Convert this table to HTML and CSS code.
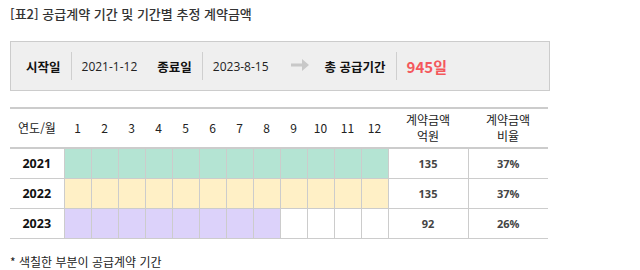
FILE: index.html
```html
<!DOCTYPE html>
<html lang="ko">
<head>
<meta charset="utf-8">
<link rel="stylesheet" href="styles.css">
</head>
<body>
<div class="page">
  <h1 class="title">[표2] 공급계약 기간 및 기간별 추정 계약금액</h1>
  <div class="summary">
    <span class="label">시작일</span>
    <span class="sep"></span>
    <span class="value">2021-1-12</span>
    <span class="label">종료일</span>
    <span class="sep"></span>
    <span class="value">2023-8-15</span>
    <svg class="arrow" width="18" height="12" viewBox="0 0 18 12"><path d="M0 4.5h11V0l7 6-7 6V7.5H0z" fill="#c8c8c8"/></svg>
    <span class="label total">총 공급기간</span>
    <span class="sep"></span>
    <span class="days">945일</span>
  </div>
  <table class="grid">
    <colgroup>
      <col class="c-year">
      <col class="c-m"><col class="c-m"><col class="c-m"><col class="c-m"><col class="c-m"><col class="c-m">
      <col class="c-m"><col class="c-m"><col class="c-m"><col class="c-m"><col class="c-m"><col class="c-m">
      <col class="c-amt"><col class="c-amt">
    </colgroup>
    <thead>
      <tr>
        <th>연도/월</th>
        <th>1</th><th>2</th><th>3</th><th>4</th><th>5</th><th>6</th>
        <th>7</th><th>8</th><th>9</th><th>10</th><th>11</th><th>12</th>
        <th>계약금액<br>억원</th>
        <th>계약금액<br>비율</th>
      </tr>
    </thead>
    <tbody>
      <tr>
        <td class="year">2021</td>
        <td class="g"></td><td class="g"></td><td class="g"></td><td class="g"></td><td class="g"></td><td class="g"></td>
        <td class="g"></td><td class="g"></td><td class="g"></td><td class="g"></td><td class="g"></td><td class="g"></td>
        <td class="num">135</td><td class="num">37%</td>
      </tr>
      <tr>
        <td class="year">2022</td>
        <td class="y"></td><td class="y"></td><td class="y"></td><td class="y"></td><td class="y"></td><td class="y"></td>
        <td class="y"></td><td class="y"></td><td class="y"></td><td class="y"></td><td class="y"></td><td class="y"></td>
        <td class="num">135</td><td class="num">37%</td>
      </tr>
      <tr>
        <td class="year">2023</td>
        <td class="p"></td><td class="p"></td><td class="p"></td><td class="p"></td><td class="p"></td><td class="p"></td>
        <td class="p"></td><td class="p"></td><td></td><td></td><td></td><td></td>
        <td class="num">92</td><td class="num">26%</td>
      </tr>
    </tbody>
  </table>
  <p class="note">* 색칠한 부분이 공급계약 기간</p>
</div>
</body>
</html>
```
FILE: styles.css
```css
* { box-sizing: border-box; }
html, body { margin: 0; padding: 0; background: #fff; }
body {
  font-family: "Noto Sans CJK KR", "Noto Sans", sans-serif;
  color: #222;
}
.page { padding: 5px 10px 0 10px; width: 640px; }
.title {
  margin: 0;
  font-size: 13px;
  font-weight: 500;
  color: #333;
  line-height: 18px;
}
.summary {
  margin-top: 18px;
  width: 540px;
  height: 50px;
  background: #efefef;
  border: 1px solid #cccccc;
  display: flex;
  align-items: center;
  padding-left: 15px;
}
.label {
  font-size: 12.5px;
  font-weight: 700;
  color: #111;
}
.sep {
  width: 1px;
  height: 28px;
  background: #cfcfcf;
  margin: 0 10px;
}
.value {
  font-family: "Open Sans", "Noto Sans", sans-serif;
  font-size: 12px;
  color: #222;
  margin-right: 20px;
}
.arrow { margin: 0 16px 3px 2px; }
.days {
  font-size: 15px;
  font-weight: 700;
  color: #f4585c;
}
.grid {
  margin-top: 16px;
  border-collapse: collapse;
  table-layout: fixed;
  width: 538px;
  border-top: 2px solid #cccccc;
}
.c-year { width: 54px; }
.c-m { width: 27px; }
.c-amt { width: 80px; }
.grid th {
  height: 40px;
  font-size: 12px;
  font-weight: 400;
  color: #222;
  line-height: 16px;
  padding: 0;
  border-bottom: 2px solid #cccccc;
  text-align: center;
}
.grid td {
  height: 30px;
  padding: 0;
  border: 1px solid #cccccc;
  text-align: center;
}
.grid tr td:first-child { border-left: none; }
.grid tr td:last-child { border-right: none; }
.grid tbody tr:first-child td { border-top: none; }
.year {
  font-family: "Open Sans", "Noto Sans", sans-serif;
  font-size: 12.5px;
  font-weight: 700;
  color: #111;
}
.num {
  font-family: "Open Sans", "Noto Sans", sans-serif;
  font-size: 11px;
  font-weight: 700;
  color: #444;
}
.g { background: #b4e4d3; }
.y { background: #fff0c6; }
.p { background: #dcd2fa; }
.note {
  margin: 15px 0 0 0;
  font-size: 12px;
  line-height: 16px;
  color: #222;
}
```
